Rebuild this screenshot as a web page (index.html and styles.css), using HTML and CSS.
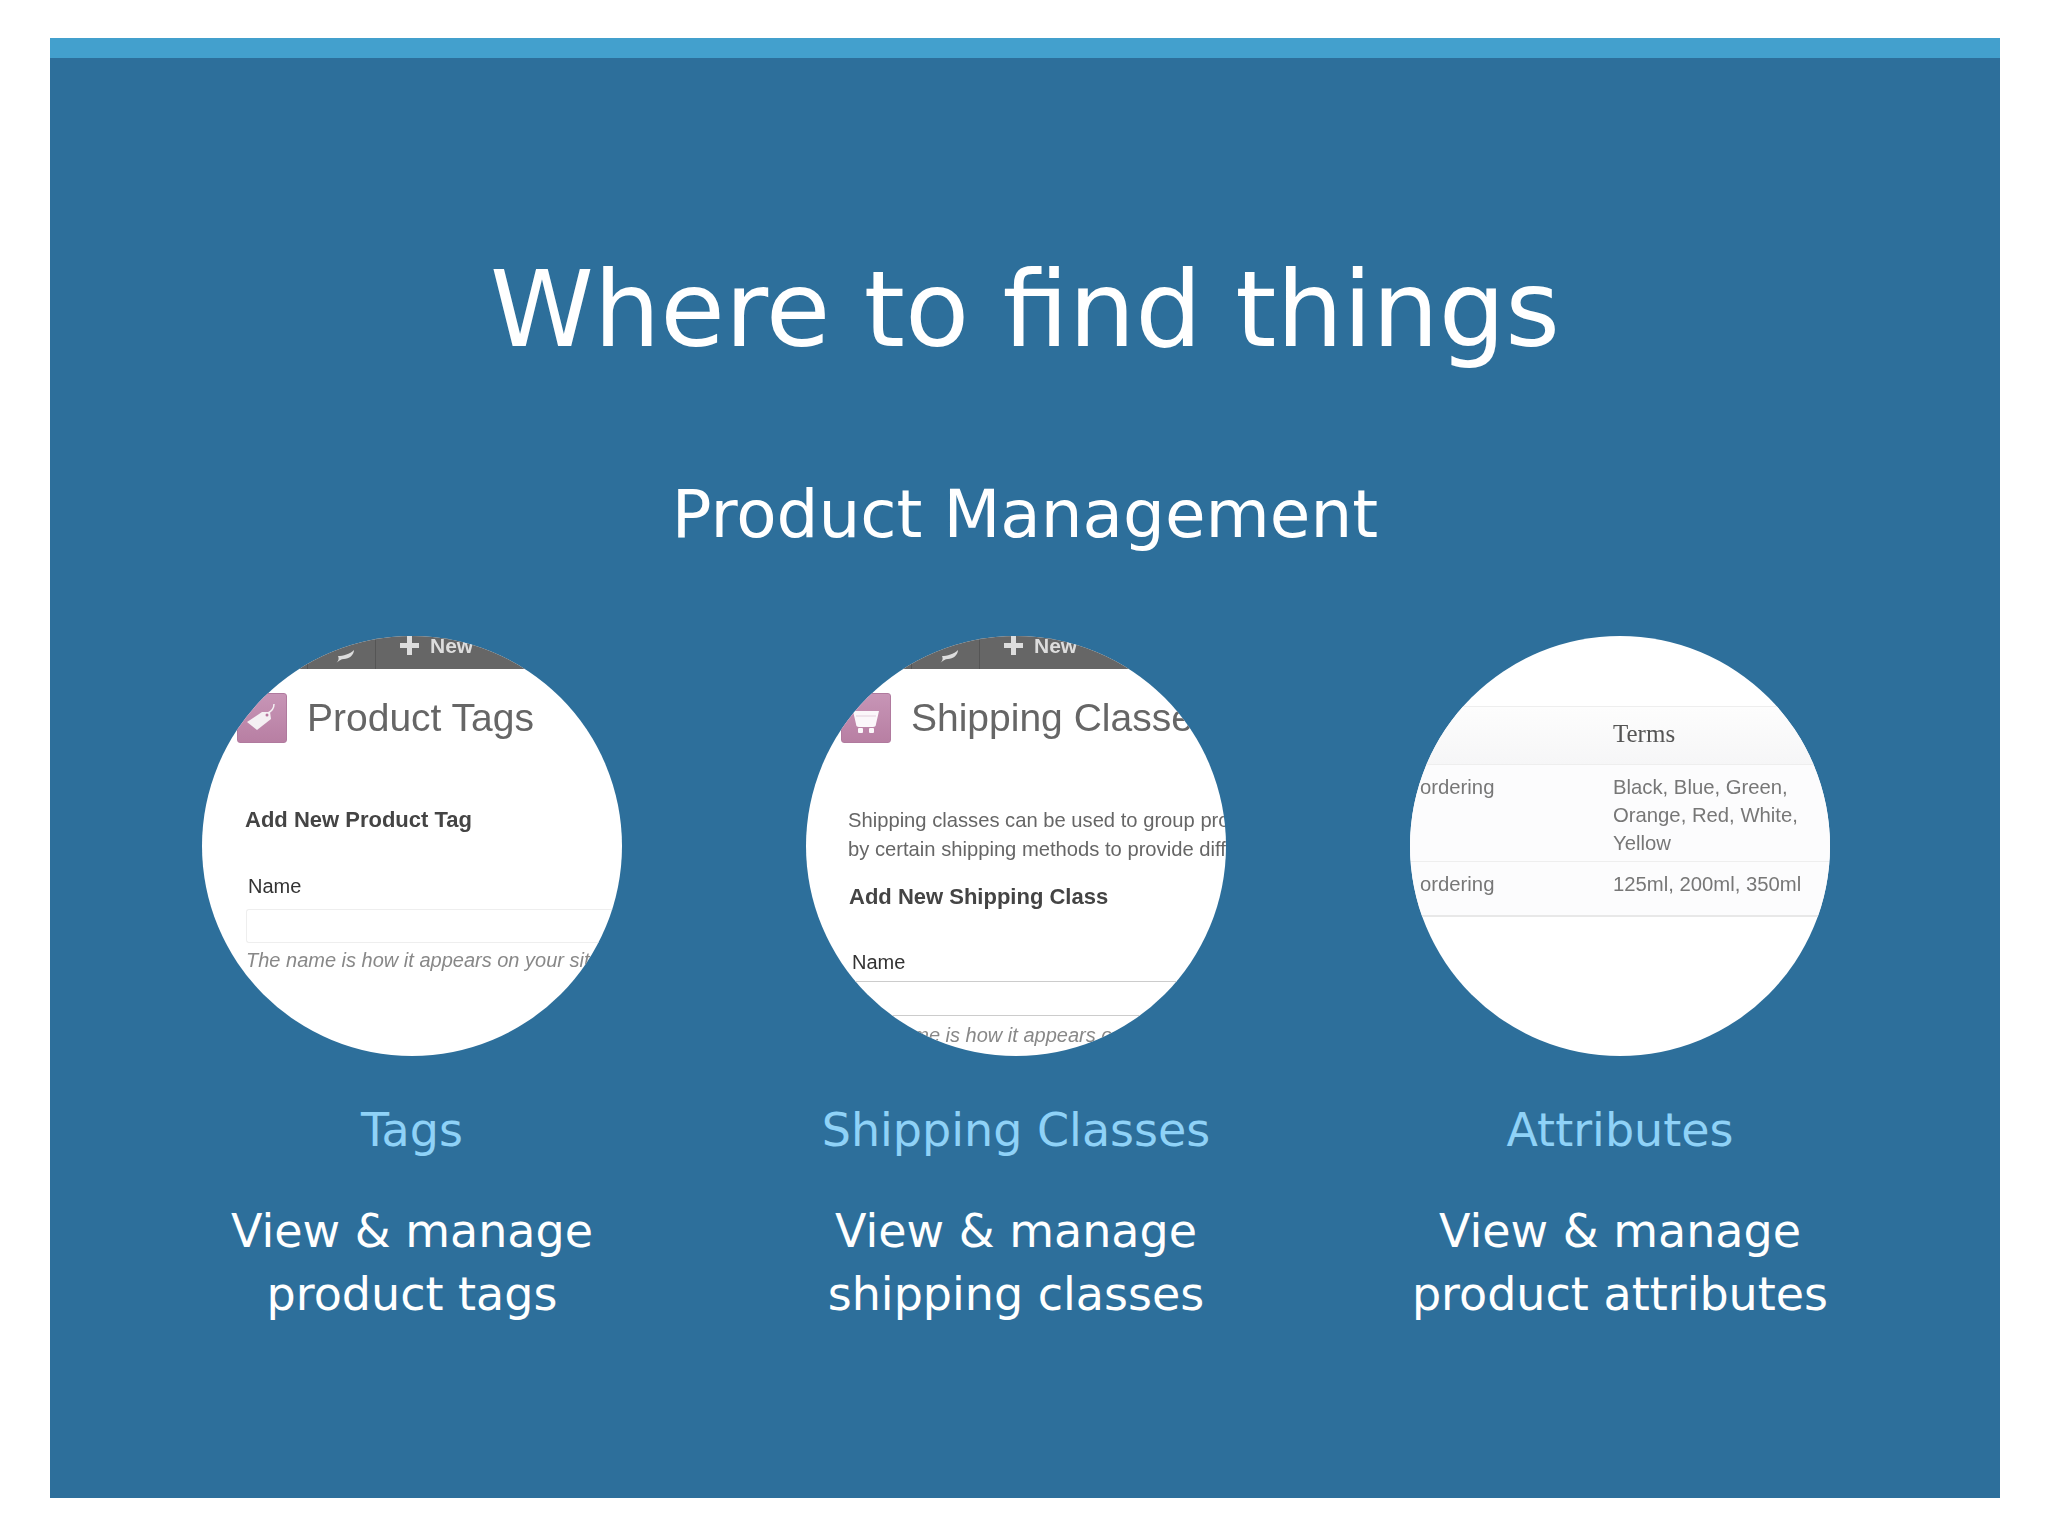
FILE: index.html
```html
<!DOCTYPE html>
<html lang="en">

<head>
    <meta charset="UTF-8">
    <title>Where to find things</title>
    <link rel="stylesheet" href="styles.css">
</head>

<body>
    <div class="slide">
        <h1 class="title">Where to find things</h1>
        <h2 class="subtitle">Product Management</h2>

        <div class="columns">
            <div class="col">
                <div class="circle">
                    <div class="shot">
                        <div class="adminbar">
                            <div class="bar-comment">
                                <svg width="20" height="15" viewBox="0 0 20 15"><path d="M1 14 C4 12 4 9 3 7 C8 7 15 5 19 1 C19 6 14 10 9 10 C6 10 4 12 1 14Z" fill="#ddd"/></svg>
                            </div>
                            <div class="bar-new"><span class="plus"></span><span>New</span></div>
                        </div>
                        <div class="page-head">
                            <div class="page-icon">
                                <svg width="34" height="30" viewBox="0 0 34 30"><path d="M2 19 L17 9 L25 9 L26 16 L12 27 Z" fill="#f4f0f3"/><path d="M23 10 C27 8 29 5 29 1" fill="none" stroke="#f4f0f3" stroke-width="1.5"/><circle cx="22" cy="12" r="1.5" fill="#b7779f"/></svg>
                            </div>
                            <div class="page-title">Product Tags</div>
                        </div>
                        <div class="form-title tag-form-title">Add New Product Tag</div>
                        <div class="field-label tag-label">Name</div>
                        <div class="field-input"></div>
                        <div class="field-help">The name is how it appears on your site</div>
                    </div>
                </div>
                <div class="label">Tags</div>
                <p class="desc">View &amp; manage<br>product tags</p>
            </div>

            <div class="col">
                <div class="circle">
                    <div class="shot">
                        <div class="adminbar">
                            <div class="bar-comment">
                                <svg width="20" height="15" viewBox="0 0 20 15"><path d="M1 14 C4 12 4 9 3 7 C8 7 15 5 19 1 C19 6 14 10 9 10 C6 10 4 12 1 14Z" fill="#ddd"/></svg>
                            </div>
                            <div class="bar-new"><span class="plus"></span><span>New</span></div>
                        </div>
                        <div class="page-head">
                            <div class="page-icon">
                                <svg width="30" height="30" viewBox="0 -3 30 30"><path d="M2 5 H28 L25 18 C25 20 24 21 22 21 H8 C6 21 5 20 5 18 Z" fill="#fbf7fa"/><path d="M5 10 H25" stroke="#e3cfdc" stroke-width="1"/><rect x="7" y="22" width="5" height="5" rx="1" fill="#fbf7fa"/><rect x="18" y="22" width="5" height="5" rx="1" fill="#fbf7fa"/></svg>
                            </div>
                            <div class="page-title">Shipping Classes</div>
                        </div>
                        <div class="intro">Shipping classes can be used to group products<br>by certain shipping methods to provide different rates</div>
                        <div class="form-title ship-form-title">Add New Shipping Class</div>
                        <div class="field-label ship-label">Name</div>
                        <div class="field-line"></div>
                        <div class="field-help ship-help">The name is how it appears on your site</div>
                    </div>
                </div>
                <div class="label">Shipping Classes</div>
                <p class="desc">View &amp; manage<br>shipping classes</p>
            </div>

            <div class="col">
                <div class="circle">
                    <div class="shot">
                        <div class="terms-table">
                            <div class="terms-row terms-head">
                                <div></div>
                                <div>Terms</div>
                            </div>
                            <div class="terms-row">
                                <div>ordering</div>
                                <div>Black, Blue, Green,<br>Orange, Red, White,<br>Yellow</div>
                            </div>
                            <div class="terms-row terms-last">
                                <div>ordering</div>
                                <div>125ml, 200ml, 350ml</div>
                            </div>
                        </div>
                    </div>
                </div>
                <div class="label">Attributes</div>
                <p class="desc">View &amp; manage<br>product attributes</p>
            </div>
        </div>
    </div>
</body>

</html>
```

FILE: styles.css
```css
body {
    margin: 0;
    background-color: #fff;
    font-family: "DejaVu Sans", sans-serif;
    color: #fff;
}

.slide {
    margin: 38px 48px 38px 50px;
    height: 1440px;
    background-color: #2d6f9b;
    border-top: 20px solid #43a0cd;
}

.title {
    margin: 0;
    padding-top: 192px;
    font-size: 105px;
    line-height: 120px;
    font-weight: 400;
    text-align: center;
}

.subtitle {
    margin: 0;
    padding-top: 103px;
    font-size: 66px;
    line-height: 84px;
    font-weight: 400;
    text-align: center;
}

.columns {
    display: grid;
    grid-template-columns: repeat(3, 604px);
    padding: 79px 0 0 60px;
}

.col {
    display: flex;
    flex-direction: column;
    align-items: center;
}

.circle {
    width: 420px;
    height: 420px;
    border-radius: 50%;
    overflow: hidden;
    background-color: #fff;
}

.shot {
    height: 100%;
    font-family: "Liberation Sans", sans-serif;
    white-space: nowrap;
    filter: blur(0.5px);
}

.label {
    margin-top: 44px;
    font-size: 46px;
    line-height: 60px;
    color: #8fd2f7;
}

.desc {
    margin: 40px 0 0;
    font-size: 46px;
    line-height: 63px;
    text-align: center;
}

/* screenshot bits */
.adminbar {
    display: flex;
    height: 33px;
    padding-left: 105px;
    background-color: #666;
    color: #ddd;
    font-size: 21px;
    font-weight: 700;
}

.bar-comment {
    width: 69px;
    padding: 9px 0 0 27px;
    box-sizing: border-box;
    border-left: 1px solid #555;
    border-right: 1px solid #555;
}

.bar-new {
    display: flex;
    align-items: flex-start;
    gap: 11px;
    padding-left: 24px;
    line-height: 20px;
}

.plus {
    width: 19px;
    height: 19px;
    background: linear-gradient(#ddd, #ddd) center / 19px 5px no-repeat,
        linear-gradient(#ddd, #ddd) center / 5px 19px no-repeat;
}

.page-head {
    display: flex;
    gap: 20px;
    padding: 24px 0 0 35px;
}

.page-icon {
    display: flex;
    align-items: center;
    justify-content: center;
    width: 50px;
    height: 50px;
    box-sizing: border-box;
    border: 1px solid #b07a9e;
    border-radius: 3px;
    background-image: linear-gradient(#c795b6, #b87fa3);
}

.page-title {
    font-size: 39px;
    line-height: 50px;
    color: #666;
}

.form-title {
    font-size: 22px;
    font-weight: 700;
    line-height: 26px;
    color: #444;
}

.tag-form-title {
    padding: 64px 0 0 43px;
}

.field-label {
    padding-left: 46px;
    font-size: 20px;
    line-height: 24px;
    color: #333;
}

.tag-label {
    padding-top: 41px;
}

.field-input {
    height: 32px;
    margin: 11px 0 0 44px;
    border: 1px solid #eee;
    border-right: 0;
    border-radius: 3px 0 0 3px;
}

.field-help {
    padding: 5px 0 0 44px;
    font-size: 20px;
    font-style: italic;
    line-height: 24px;
    color: #888;
}

.intro {
    padding: 63px 0 0 42px;
    font-size: 20.2px;
    line-height: 29px;
    color: #666;
}

.ship-form-title {
    padding: 20px 0 0 43px;
}

.ship-label {
    padding-top: 40px;
}

.field-line {
    height: 33px;
    margin-top: 7px;
    border-top: 1px solid #ccc;
    border-bottom: 1px solid #ccc;
}

.ship-help {
    padding-top: 7px;
}

.terms-table {
    padding-top: 70px;
    font-size: 20.3px;
    line-height: 28px;
    color: #777;
}

.terms-row {
    display: grid;
    grid-template-columns: 193px 1fr;
    padding: 8px 0 0 10px;
    height: 88px;
    border-top: 1px solid #eee;
    background-color: #fcfcfd;
}

.terms-head {
    height: 58px;
    padding-top: 13px;
    box-sizing: border-box;
    background-image: linear-gradient(#fdfdfd, #f6f6f7);
    font-family: "Liberation Serif", serif;
    font-size: 25px;
    color: #555;
}

.terms-last {
    height: 45px;
    border-bottom: 2px solid #e8e8e8;
}
```
